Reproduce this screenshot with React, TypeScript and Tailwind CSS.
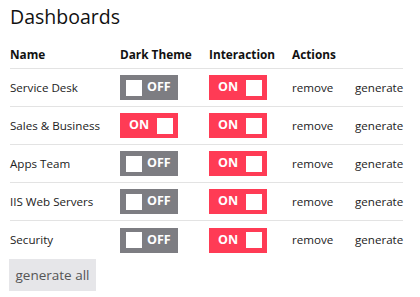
import React from "react";

const rows = [
  { name: "Service Desk", dark: false, inter: true },
  { name: "Sales & Business", dark: true, inter: true },
  { name: "Apps Team", dark: false, inter: true },
  { name: "IIS Web Servers", dark: false, inter: true },
  { name: "Security", dark: false, inter: true },
];

function Toggle({ on }: { on: boolean }) {
  if (on) {
    return (
      <div className="flex h-[25px] w-[58px] items-center justify-between bg-[#ff3b55] pl-[9px] pr-[5px]">
        <span className="text-[12.5px] font-bold leading-none text-white">ON</span>
        <span className="h-[16px] w-[16px] bg-white" />
      </div>
    );
  }
  return (
    <div className="flex h-[25px] w-[58px] items-center bg-[#7d7d82] pl-[6px]">
      <span className="h-[16px] w-[16px] bg-white" />
      <span className="ml-[5px] text-[12.5px] font-bold leading-none text-white">OFF</span>
    </div>
  );
}

export default function App() {
  return (
    <div className="w-[420px] bg-white pl-[10px] pt-[4px] text-[#222]" style={{ fontFamily: '"Open Sans", "Noto Sans", sans-serif' }}>
      <h1 className="text-[19.5px] font-normal leading-[26px] text-[#111]">Dashboards</h1>
      <div className="mt-[12px] w-[393px]">
        <div className="grid h-[27px] grid-cols-[110px_89px_83px_63px_48px] items-center border-b border-[#e3e3e3] text-[11.8px] font-bold text-[#111]">
          <div>Name</div>
          <div>Dark Theme</div>
          <div>Interaction</div>
          <div>Actions</div>
          <div />
        </div>
        {rows.map((r, i) => (
          <div
            key={r.name}
            className={`grid h-[38px] grid-cols-[110px_89px_83px_63px_48px] items-center text-[11.6px] text-[#222] ${i < rows.length - 1 ? "border-b border-[#e3e3e3]" : ""}`}
          >
            <div className="whitespace-nowrap">{r.name}</div>
            <div><Toggle on={r.dark} /></div>
            <div><Toggle on={r.inter} /></div>
            <div>remove</div>
            <div className="whitespace-nowrap">generate</div>
          </div>
        ))}
      </div>
      <button className="ml-[-1px] h-[32px] w-[87px] bg-[#e6e6e9] text-[13.5px] text-[#555]">generate all</button>
    </div>
  );
}
